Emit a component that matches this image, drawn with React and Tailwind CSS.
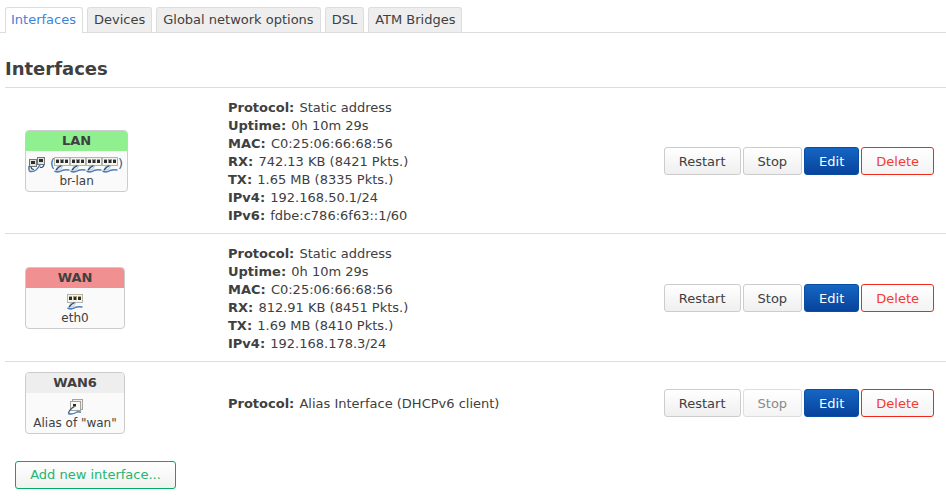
import React from 'react';

const font = { fontFamily: '"DejaVu Sans", sans-serif' };

// small ethernet port icon, 16px
const PortIcon = () => (
  <svg width="16" height="16" viewBox="0 0 16 16" className="block">
    <rect x="0.5" y="0.5" width="15" height="8" fill="#f4f4f0" stroke="#b4b4ac" />
    <rect x="2" y="2" width="3" height="4" fill="#2e2e2a" />
    <rect x="6.500" y="2" width="3" height="4" fill="#2e2e2a" />
    <rect x="11" y="2" width="3" height="4" fill="#2e2e2a" />
    <path d="M2 2.500h3M6.500 2.500h3M11 2.500h3" stroke="#b8a468" />
    <path d="M3.500 9h5l-2 4h-4z" fill="#e6ecf2" stroke="#9fb0c2" strokeWidth="0.6" />
    <path d="M2 13c1.500-2 3-3.500 5.500-4.500" fill="none" stroke="#2f4a68" strokeWidth="1.300" />
    <path d="M0.500 14c3 1.500 6 .8 8.500-.8 2-.8 4.500-.4 6.500-.2" fill="none" stroke="#4a80c0" strokeWidth="1.600" />
  </svg>
);

// two stacked machines joined by a cable
const BridgeIcon = () => (
  <svg width="17" height="16" viewBox="0 0 17 16" className="block">
    <rect x="1.500" y="2.500" width="7" height="7" fill="#dfe3e0" stroke="#70787c" />
    <rect x="9.500" y="0.500" width="7" height="7" fill="#dfe3e0" stroke="#70787c" />
    <rect x="3" y="4" width="4" height="3" fill="#2e2e2a" />
    <rect x="11" y="2" width="4" height="3" fill="#2e2e2a" />
    <path d="M1 9v4.500M3 9.500c0 2 1 3 3 3" fill="none" stroke="#33506f" strokeWidth="1.200" />
    <path d="M1 14c3 1 5 .5 7-1 2-1.500 3-3 4-5.500" fill="none" stroke="#4a80c0" strokeWidth="1.400" />
    <path d="M12 10c1.500 1 3 .5 4-2" fill="none" stroke="#33506f" strokeWidth="1.200" />
  </svg>
);

const AliasIcon = () => (
  <svg width="16" height="16" viewBox="0 0 16 16" className="block">
    <rect x="5.500" y="0.500" width="10" height="10" fill="#eeeeea" stroke="#a4a49c" />
    <rect x="3.500" y="2.500" width="10" height="9" fill="#f8f8f4" stroke="#a4a49c" />
    <rect x="6" y="5" width="3" height="2.500" fill="#2e2e2a" />
    <path d="M1.500 14c1-3 3-5 6-6.500" fill="none" stroke="#33506f" strokeWidth="1.200" />
    <path d="M1 14.500c3 1 6 .5 9-1.500 1.500-.5 3 0 4 .3" fill="none" stroke="#4a80c0" strokeWidth="1.500" />
  </svg>
);

const Info = ({ label, value }) => (
  <div className="h-[18px] pt-px leading-[18px]">
    <strong className="font-bold mr-px">{label}:</strong> {value}
  </div>
);

const Card = ({ name, headerClass, children, label }) => (
  <div className="min-w-[100px] rounded-[4px] border border-[#cccccc] bg-[#fafafa] text-center overflow-hidden">
    <div className={`h-[20px] leading-[20px] font-bold ${headerClass}`}>{name}</div>
    <div className="px-[2px] pt-[6px] pb-[3px]">
      <div className="flex justify-center h-[16px]">{children}</div>
      <div className="h-[15px] pt-px leading-[14px] text-[12px]">{label}</div>
    </div>
  </div>
);

const Button = ({ children, className }) => (
  <button className={`h-[28px] px-[14px] rounded-[3px] border text-[13px] leading-none ${className}`} style={font}>
    {children}
  </button>
);

const plain = 'border-[#cccccc] bg-gradient-to-b from-white to-[#efefef] text-[#404040]';

const Actions = ({ stopDisabled }) => (
  <div className="ml-auto mr-[12px] flex gap-[2px]">
    <Button className={plain}>Restart</Button>
    <Button className={stopDisabled ? 'border-[#dddddd] bg-gradient-to-b from-white to-[#f4f4f4] text-[#8a8a8a]' : plain}>Stop</Button>
    <Button className="border-[#0a4ea3] bg-gradient-to-b from-[#1566c4] to-[#08439c] text-[#ffffff]">Edit</Button>
    <Button className="border-[#f02a1a] bg-gradient-to-b from-white to-[#f3f3f3] text-[#f53a30]">Delete</Button>
  </div>
);

const Row = ({ card, lines, stopDisabled, last }) => (
  <div className={`flex items-center pt-[10px] pb-[9px] border-b ${last ? 'border-transparent' : 'border-[#dddddd]'}`}>
    <div className="w-[223px] pl-[20px] flex">{card}</div>
    <div>
      {lines.map(([label, value]) => (
        <Info key={label} label={label} value={value} />
      ))}
    </div>
    <Actions stopDisabled={stopDisabled} />
  </div>
);

const Tab = ({ children, active }) => (
  <div
    className={`h-[25px] leading-[24px] border border-b-0 rounded-t-[3px] ${
      active
        ? 'h-[26px] -mb-px pl-[5px] pr-[6px] bg-white border-[#dddddd] text-[#3a84dc]'
        : 'px-[6px] bg-[#eeeeee] border-[#dddddd] text-[#404040]'
    }`}
  >
    {children}
  </div>
);

export default function App() {
  return (
    <div className="w-[946px] h-[497px] overflow-hidden bg-white text-[13px] text-[#404040]" style={font}>
      <div className="pt-[8px] pl-[5px] flex items-end gap-[4px] border-b border-[#dddddd] h-[33px]">
        <Tab active>Interfaces</Tab>
        <Tab>Devices</Tab>
        <Tab>Global network options</Tab>
        <Tab>DSL</Tab>
        <Tab>ATM Bridges</Tab>
      </div>

      <div className="pl-[5px]">
        <h2 className="h-[55px] pt-[24px] text-[18px] leading-[24px] font-bold border-b border-[#dddddd]">Interfaces</h2>

        <Row
          card={
            <Card name="LAN" headerClass="bg-[#90f090]" label="br-lan">
              <span className="flex items-start text-[13px] leading-[14px]">
                <BridgeIcon />
                <span className="ml-[5px] -mr-px text-[#3f5f88]">(</span>
                <PortIcon />
                <PortIcon />
                <PortIcon />
                <PortIcon />
                <span className="mr-[2px] text-[#3f5f88]">)</span>
              </span>
            </Card>
          }
          lines={[
            ['Protocol', 'Static address'],
            ['Uptime', '0h 10m 29s'],
            ['MAC', 'C0:25:06:66:68:56'],
            ['RX', '742.13 KB (8421 Pkts.)'],
            ['TX', '1.65 MB (8335 Pkts.)'],
            ['IPv4', '192.168.50.1/24'],
            ['IPv6', 'fdbe:c786:6f63::1/60'],
          ]}
        />
        <Row
          card={
            <Card name="WAN" headerClass="bg-[#f09090]" label="eth0">
              <PortIcon />
            </Card>
          }
          lines={[
            ['Protocol', 'Static address'],
            ['Uptime', '0h 10m 29s'],
            ['MAC', 'C0:25:06:66:68:56'],
            ['RX', '812.91 KB (8451 Pkts.)'],
            ['TX', '1.69 MB (8410 Pkts.)'],
            ['IPv4', '192.168.178.3/24'],
          ]}
        />
        <Row
          last
          stopDisabled
          card={
            <Card name="WAN6" headerClass="bg-[#eeeeee]" label={'Alias of "wan"'}>
              <AliasIcon />
            </Card>
          }
          lines={[['Protocol', 'Alias Interface (DHCPv6 client)']]}
        />
      </div>

      <div className="pl-[15px] pt-[17px]">
        <button
          className="h-[28px] w-[161px] rounded-[3px] border border-[#00ad5f] bg-gradient-to-b from-white to-[#f1f1f1] text-[13px] text-[#22b573]"
          style={font}
        >
          Add new interface...
        </button>
      </div>
    </div>
  );
}
